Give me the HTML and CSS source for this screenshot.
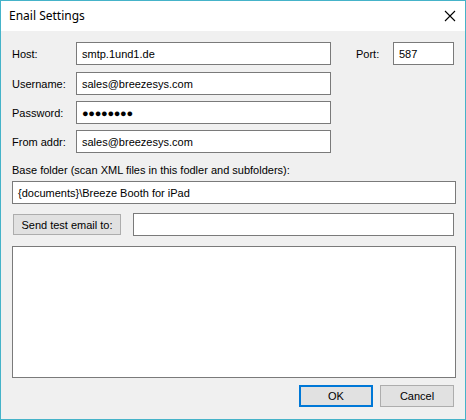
FILE: index.html
```html
<!DOCTYPE html>
<html>
<head>
<meta charset="utf-8">
<link rel="stylesheet" href="styles.css">
</head>
<body>
<div class="window">
  <div class="titlebar">
    <span class="title">Enail Settings</span>
    <svg class="close" width="12" height="12" viewBox="0 0 12 12"><path d="M1 1 L11 11 M11 1 L1 11" stroke="#000" stroke-width="1.1" fill="none"/></svg>
  </div>
  <div class="content">
    <div class="row r1">
      <span class="label">Host:</span>
      <div class="field main">smtp.1und1.de</div>
      <span class="label port-label">Port:</span>
      <div class="field port">587</div>
    </div>
    <div class="row r2">
      <span class="label">Username:</span>
      <div class="field main">sales@breezesys.com</div>
    </div>
    <div class="row r3">
      <span class="label">Password:</span>
      <div class="field main"><span class="dots">●●●●●●●●</span></div>
    </div>
    <div class="row r3">
      <span class="label">From addr:</span>
      <div class="field main">sales@breezesys.com</div>
    </div>
    <div class="folder-label">Base folder (scan XML files in this fodler and subfolders):</div>
    <div class="field wide">{documents}\Breeze Booth for iPad</div>
    <div class="row send-row">
      <div class="button send">Send test email to:</div>
      <div class="field email"></div>
    </div>
    <div class="field log"></div>
    <div class="actions">
      <div class="button ok">OK</div>
      <div class="button cancel">Cancel</div>
    </div>
  </div>
</div>
</body>
</html>
```
FILE: styles.css
```css
html, body {
  margin: 0;
  padding: 0;
  background: #ffffff;
}
.window {
  box-sizing: border-box;
  width: 466px;
  height: 420px;
  border: 1px solid #45b3c9;
  display: flex;
  flex-direction: column;
  font-family: "Liberation Sans", Arial, sans-serif;
  font-size: 11px;
  color: #000;
}
.titlebar {
  height: 30px;
  flex: none;
  background: #fff;
  display: flex;
  align-items: center;
  padding-left: 8px;
  padding-right: 9px;
}
.title {
  font-family: "Noto Sans", "Liberation Sans", sans-serif;
  font-size: 12px;
  flex: 1;
  margin-top: -1px;
}
.close {
  display: block;
  margin-top: -1px;
}
.content {
  flex: 1;
  background: #f0f0f0;
  padding: 11px 9px 12px 11px;
  display: flex;
  flex-direction: column;
}
.row {
  display: flex;
  align-items: center;
  height: 23px;
}
.r2 { margin-top: 7px; }
.r3 { margin-top: 6px; }
.label {
  width: 64px;
  flex: none;
}
.field {
  box-sizing: border-box;
  height: 23px;
  border: 1px solid #7a7a7a;
  background: #fff;
  padding-left: 5px;
  display: flex;
  align-items: center;
  white-space: nowrap;
  flex: none;
}
.field.main { width: 255px; }
.port-label {
  width: 37px;
  margin-left: 25px;
}
.field.port { width: 61px; }
.dots {
  font-size: 11px;
  letter-spacing: -0.3px;
}
.folder-label {
  margin-top: 11px;
  line-height: 13px;
  height: 13px;
}
.field.wide {
  margin-top: 4px;
  width: 444px;
}
.send-row { margin-top: 9px; }
.button {
  box-sizing: border-box;
  background: #e1e1e1;
  border: 1px solid #adadad;
  display: flex;
  align-items: center;
  justify-content: center;
  white-space: nowrap;
}
.button.send {
  width: 108px;
  height: 21px;
  margin-left: 1px;
}
.field.email {
  width: 321px;
  margin-left: 12px;
}
.field.log {
  margin-top: 10px;
  width: 444px;
  height: 132px;
}
.actions {
  margin-top: 7px;
  display: flex;
  justify-content: flex-end;
  gap: 7px;
  padding-right: 2px;
}
.button.ok,
.button.cancel {
  width: 74px;
  height: 22px;
}
.button.ok {
  border: 2px solid #0078d7;
}
```
